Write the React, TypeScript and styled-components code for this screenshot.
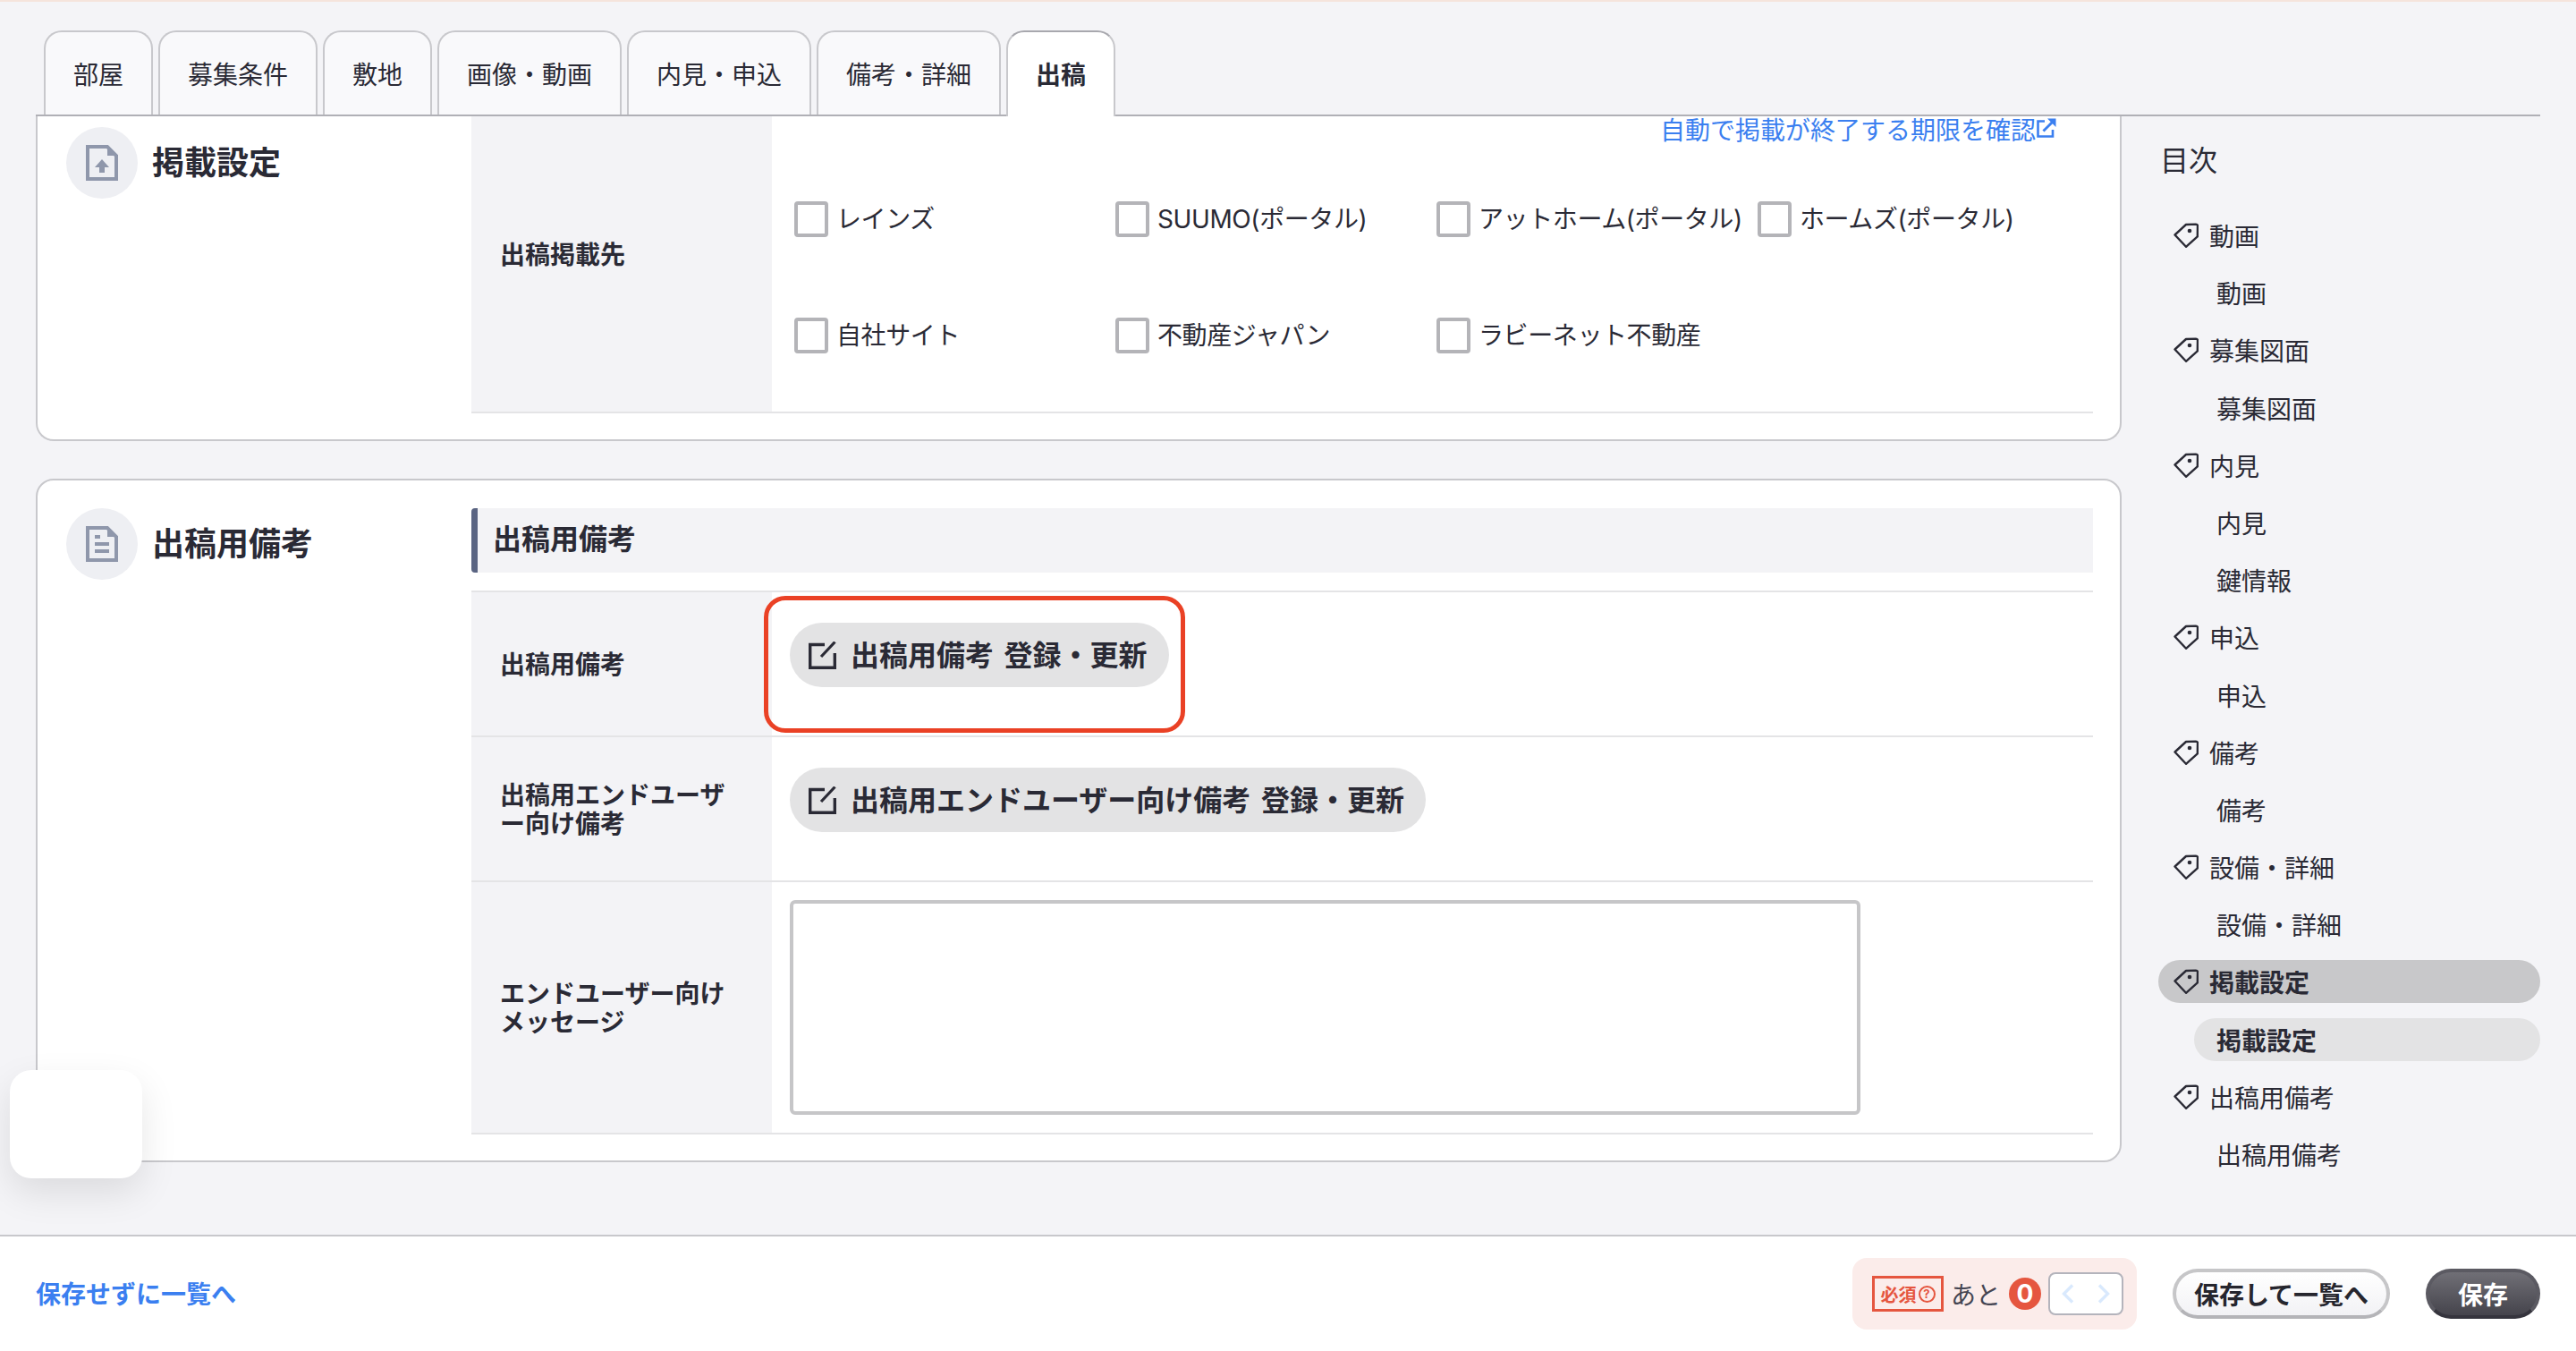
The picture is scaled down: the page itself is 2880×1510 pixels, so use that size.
import React from 'react';
import styled, { createGlobalStyle } from 'styled-components';

const GlobalStyle = createGlobalStyle`
  html, body {
    margin: 0;
    padding: 0;
    background: #f4f4f7;
  }
  body {
    font-family: "Inter", "Noto Sans CJK JP", sans-serif;
    color: #2a2a35;
  }
  * {
    box-sizing: border-box;
  }
`;

const tabs = ['部屋', '募集条件', '敷地', '画像・動画', '内見・申込', '備考・詳細', '出稿'];

const media = [
  ['レインズ', 'SUUMO(ポータル)', 'アットホーム(ポータル)', 'ホームズ(ポータル)'],
  ['自社サイト', '不動産ジャパン', 'ラビーネット不動産'],
];

const toc = [
  { title: '動画', subs: ['動画'] },
  { title: '募集図面', subs: ['募集図面'] },
  { title: '内見', subs: ['内見', '鍵情報'] },
  { title: '申込', subs: ['申込'] },
  { title: '備考', subs: ['備考'] },
  { title: '設備・詳細', subs: ['設備・詳細'] },
  { title: '掲載設定', subs: ['掲載設定'], active: true },
  { title: '出稿用備考', subs: ['出稿用備考'] },
];

const App: React.FC = () => {
  return (
    <Page>
      <GlobalStyle />
      <TopStrip />
      <TabBar>
        {tabs.map((t) => (
          <Tab key={t} $active={t === '出稿'}>{t}</Tab>
        ))}
      </TabBar>
      <Body>
        <Column>
          <Card $open>
            <SectionHead $top={12}>
              <IconCircle>
                <FileUpIcon />
              </IconCircle>
              <SectionTitle>掲載設定</SectionTitle>
            </SectionHead>
            <Table>
              <Row>
                <Label $raised>出稿掲載先</Label>
                <MediaCell>
                  <DeadlineLink>
                    自動で掲載が終了する期限を確認
                    <ExternalIcon />
                  </DeadlineLink>
                  <MediaGrid>
                    {media.flat().map((m) => (
                      <MediaOption key={m}>
                        <Check type="checkbox" />
                        {m}
                      </MediaOption>
                    ))}
                  </MediaGrid>
                </MediaCell>
              </Row>
            </Table>
          </Card>

          <Card>
            <SectionHead>
              <IconCircle>
                <FileTextIcon />
              </IconCircle>
              <SectionTitle>出稿用備考</SectionTitle>
            </SectionHead>
            <Table>
              <SubHeading>出稿用備考</SubHeading>
              <RowGroup>
                <Row>
                  <Label>出稿用備考</Label>
                  <Cell>
                    <EditButton>
                      <EditIcon />
                      出稿用備考 登録・更新
                    </EditButton>
                    <Highlight />
                  </Cell>
                </Row>
                <Row>
                  <Label>出稿用エンドユーザー向け備考</Label>
                  <Cell>
                    <EditButton>
                      <EditIcon />
                      出稿用エンドユーザー向け備考 登録・更新
                    </EditButton>
                  </Cell>
                </Row>
                <Row>
                  <Label>エンドユーザー向けメッセージ</Label>
                  <TextCell>
                    <Message />
                  </TextCell>
                </Row>
              </RowGroup>
            </Table>
          </Card>
        </Column>

        <Sidebar>
          <SidebarTitle>目次</SidebarTitle>
          <TocList>
            {toc.map((group) => (
              <React.Fragment key={group.title}>
                <TocMain $active={group.active}>
                  <TagIcon />
                  {group.title}
                </TocMain>
                {group.subs.map((s) => (
                  <TocSub key={s} $active={group.active}>{s}</TocSub>
                ))}
              </React.Fragment>
            ))}
          </TocList>
        </Sidebar>
      </Body>

      <Footer>
        <BackLink>保存せずに一覧へ</BackLink>
        <FooterActions>
          <RequiredBox>
            <RequiredTag>
              必須
              <HelpMark>?</HelpMark>
            </RequiredTag>
            <RemainText>あと</RemainText>
            <CountBadge>0</CountBadge>
            <PagerBox>
              <ChevronIcon dir="left" />
              <ChevronIcon dir="right" />
            </PagerBox>
          </RequiredBox>
          <SaveListButton>保存して一覧へ</SaveListButton>
          <SaveButton>保存</SaveButton>
        </FooterActions>
      </Footer>

      <FloatingBox />
    </Page>
  );
};

const FileUpIcon = () => (
  <svg width="36" height="40" viewBox="0 0 36 40" fill="none">
    <path d="M2 2H24L34 12V38H2Z" stroke="#8f97ab" strokeWidth="4" />
    <path d="M24 1L35 12H24Z" fill="#8f97ab" />
    <path d="M18 16L26 25H21V31H15V25H10Z" fill="#8f97ab" />
  </svg>
);

const FileTextIcon = () => (
  <svg width="36" height="40" viewBox="0 0 36 40" fill="none">
    <path d="M2 2H24L34 12V38H2Z" stroke="#8f97ab" strokeWidth="4" />
    <path d="M24 1L35 12H24Z" fill="#8f97ab" />
    <path d="M10 10H16V14H10ZM10 18H26V22H10ZM10 26H26V30H10Z" fill="#8f97ab" />
  </svg>
);

const ExternalIcon = () => (
  <ExternalSvg width="22" height="22" viewBox="0 0 22 22" fill="none">
    <path d="M9 3.5H1.5V20.5H18V13" stroke="#3b7ff0" strokeWidth="2.6" />
    <path d="M7.5 14.5L18 4" stroke="#3b7ff0" strokeWidth="3" />
    <path d="M12 0.5H21.5V10Z" fill="#3b7ff0" />
  </ExternalSvg>
);

const EditIcon = () => (
  <svg width="31" height="31" viewBox="0 0 31 31" fill="none">
    <path d="M18 3.5H1.7V29.3H29.3V13" stroke="#2a2a35" strokeWidth="3.4" />
    <path d="M14 17L29.5 0.5" stroke="#2a2a35" strokeWidth="3.2" />
  </svg>
);

const TagIcon = () => (
  <svg width="28" height="28" viewBox="0 0 28 28" fill="none">
    <path d="M1.5 13.5L14 2L25 1.6Q27 1.6 27 3.6L26.8 15.4L14 26.8Z" stroke="#2a2a35" strokeWidth="2.4" strokeLinejoin="round" />
    <circle cx="18" cy="9" r="2.3" fill="#2a2a35" />
  </svg>
);

const ChevronIcon = ({ dir }: { dir: 'left' | 'right' }) => (
  <svg width="14" height="22" viewBox="0 0 14 22" fill="none">
    <path d={dir === 'left' ? 'M12 1.5L2.5 11L12 20.5' : 'M2 1.5L11.5 11L2 20.5'} stroke="#d9e9fd" strokeWidth="3.4" />
  </svg>
);

const Page = styled.div`
  position: relative;
  display: flex;
  flex-direction: column;
  width: 2880px;
  height: 1510px;
  overflow: hidden;
  background: #f4f4f7;
`;

const TopStrip = styled.div`
  height: 2px;
  background: #f5e4dc;
`;

const TabBar = styled.div`
  display: flex;
  align-items: flex-start;
  gap: 6px;
  flex: none;
  height: 96px;
  margin: 32px 40px 0;
  padding-left: 9px;
  border-bottom: 2px solid #b0b0b6;
`;

const Tab = styled.div<{ $active?: boolean }>`
  display: flex;
  align-items: center;
  height: ${(p) => (p.$active ? '96px' : '94px')};
  padding: ${(p) => (p.$active ? '4px 31px 2px' : '4px 31px 0')};
  border: 2px solid #c8c8cc;
  border-top-color: ${(p) => (p.$active ? '#a8a8ae' : '#c8c8cc')};
  border-bottom: none;
  border-radius: 20px 20px 0 0;
  background: ${(p) => (p.$active ? '#fff' : '#f9f9fb')};
  font-size: 28px;
  font-weight: ${(p) => (p.$active ? 700 : 400)};
  line-height: 40px;
  white-space: nowrap;
`;

const Body = styled.div`
  flex: 1;
  display: flex;
  padding: 0 40px;
`;

const Column = styled.div`
  display: flex;
  flex-direction: column;
  gap: 42px;
  width: 2332px;
`;

const Card = styled.section<{ $open?: boolean }>`
  display: flex;
  padding: ${(p) => (p.$open ? '0 30px 29px 0' : '31px 30px 29px 0')};
  border: 2px solid #c8c8cc;
  border-top: ${(p) => (p.$open ? 'none' : '2px solid #c8c8cc')};
  border-radius: ${(p) => (p.$open ? '0 0 20px 20px' : '20px')};
  background: #fff;
`;

const SectionHead = styled.div<{ $top?: number }>`
  display: flex;
  align-items: flex-start;
  gap: 16px;
  flex: none;
  width: 485px;
  padding: ${(p) => p.$top ?? 0}px 0 0 32px;
`;

const IconCircle = styled.div`
  display: flex;
  align-items: center;
  justify-content: center;
  flex: none;
  width: 80px;
  height: 80px;
  border-radius: 50%;
  background: #eeeff3;
`;

const SectionTitle = styled.h2`
  margin: 0;
  font-size: 36px;
  font-weight: 700;
  line-height: 80px;
`;

const Table = styled.div`
  flex: 1;
  min-width: 0;
`;

const SubHeading = styled.h3`
  height: 72px;
  margin: 0 0 20px;
  padding-left: 17px;
  border-left: 7px solid #5a6482;
  border-radius: 4px 0 0 4px;
  background: #f3f3f6;
  font-size: 32px;
  font-weight: 700;
  line-height: 70px;
`;

const RowGroup = styled.div`
  border-top: 2px solid #e4e4e6;
`;

const Row = styled.div`
  display: flex;
  border-bottom: 2px solid #e4e4e6;
`;

const Label = styled.div<{ $raised?: boolean }>`
  display: flex;
  align-items: center;
  flex: none;
  width: 336px;
  padding: ${(p) => (p.$raised ? '0 32px 20px' : '2px 32px 0')};
  background: #f3f3f6;
  font-size: 28px;
  font-weight: 700;
  line-height: 32px;
`;

const Cell = styled.div`
  position: relative;
  flex: 1;
  height: 160px;
  padding: 34px 0 0 20px;
`;

const TextCell = styled.div`
  flex: 1;
  padding: 20px 0 20px 20px;
`;

const MediaCell = styled.div`
  flex: 1;
  min-width: 0;
  display: flex;
  flex-direction: column;
  padding: 0 41px 20px 25px;
`;

const DeadlineLink = styled.a`
  display: flex;
  align-self: flex-end;
  height: 50px;
  font-size: 28px;
  line-height: 32px;
  color: #3b7ff0;
  white-space: nowrap;
`;

const ExternalSvg = styled.svg`
  margin: 2px 0 0 1px;
`;

const MediaGrid = styled.div`
  display: grid;
  grid-template-columns: repeat(4, 359px);
  grid-auto-rows: 130px;
`;

const MediaOption = styled.label`
  display: flex;
  align-items: center;
  gap: 9px;
  font-size: 28px;
  line-height: 36px;
  letter-spacing: -0.4px;
  white-space: nowrap;
`;

const Check = styled.input`
  appearance: none;
  flex: none;
  width: 38px;
  height: 40px;
  margin: 0;
  border: 4px solid #b4b4b8;
  border-radius: 4px;
  background: #fff;
`;

const EditButton = styled.button`
  display: inline-flex;
  align-items: center;
  gap: 16px;
  height: 72px;
  padding: 0 24px 5px 21px;
  border: none;
  border-radius: 36px;
  background: #e3e3e4;
  color: #2a2a35;
  font-family: inherit;
  font-size: 32px;
  font-weight: 700;
  word-spacing: 4px;
  white-space: nowrap;

  svg {
    margin-bottom: -5px;
  }
`;

const Highlight = styled.div`
  position: absolute;
  left: -9px;
  top: 4px;
  width: 471px;
  height: 153px;
  border: 5px solid #ea4125;
  border-radius: 24px;
  pointer-events: none;
`;

const Message = styled.textarea`
  display: block;
  width: 1197px;
  height: 240px;
  border: 4px solid #c6c6c8;
  border-radius: 6px;
  background: #fff;
  resize: none;
`;

const Sidebar = styled.aside`
  flex: 1;
  padding: 30px 0 0 41px;
`;

const SidebarTitle = styled.div`
  height: 40px;
  margin: 0 0 39px 2px;
  font-size: 32px;
  line-height: 40px;
`;

const TocList = styled.div`
  display: flex;
  flex-direction: column;
  gap: 16.2px;
`;

const TocMain = styled.div<{ $active?: boolean }>`
  display: flex;
  align-items: center;
  gap: 12px;
  height: 48px;
  padding-left: 17px;
  border-radius: 24px;
  background: ${(p) => (p.$active ? '#c8c8ca' : 'transparent')};
  font-size: 28px;
  font-weight: ${(p) => (p.$active ? 700 : 400)};
`;

const TocSub = styled.div<{ $active?: boolean }>`
  display: flex;
  align-items: center;
  height: 48px;
  margin-left: 40px;
  padding-left: 25px;
  border-radius: 24px;
  background: ${(p) => (p.$active ? '#e3e3e4' : 'transparent')};
  font-size: 28px;
  font-weight: ${(p) => (p.$active ? 700 : 400)};
`;

const Footer = styled.footer`
  display: flex;
  align-items: center;
  justify-content: space-between;
  flex: none;
  height: 130px;
  padding: 0 40px;
  border-top: 2px solid #c8c8cc;
  background: #fff;
`;

const BackLink = styled.a`
  margin-top: -2px;
  font-size: 28px;
  font-weight: 700;
  color: #3b7ff0;
`;

const FooterActions = styled.div`
  display: flex;
  align-items: center;
  gap: 40px;
`;

const RequiredBox = styled.div`
  display: flex;
  align-items: center;
  width: 318px;
  height: 80px;
  padding-left: 22px;
  border-radius: 16px;
  background: #fbecea;
`;

const RequiredTag = styled.div`
  display: flex;
  align-items: center;
  justify-content: center;
  gap: 2px;
  flex: none;
  width: 80px;
  height: 40px;
  border: 3px solid #e5563f;
  color: #e5563f;
  font-size: 20px;
  font-weight: 700;
`;

const HelpMark = styled.span`
  display: flex;
  align-items: center;
  justify-content: center;
  flex: none;
  width: 19px;
  height: 19px;
  border: 2px solid #e5563f;
  border-radius: 50%;
  font-size: 13px;
  line-height: 1;
`;

const RemainText = styled.span`
  margin: 0 9px 0 8px;
  font-size: 28px;
  color: #454552;
`;

const CountBadge = styled.span`
  display: flex;
  align-items: center;
  justify-content: center;
  flex: none;
  width: 36px;
  height: 36px;
  border-radius: 50%;
  background: #e5563f;
  color: #fff;
  font-size: 28px;
  font-weight: 700;
`;

const PagerBox = styled.div`
  display: flex;
  align-items: center;
  justify-content: center;
  gap: 26px;
  flex: none;
  width: 84px;
  height: 48px;
  margin-left: 8px;
  border: 2px solid #b4b4bc;
  border-radius: 8px;
  background: #fff;
`;

const SaveListButton = styled.button`
  width: 243px;
  height: 56px;
  padding: 0;
  border: 4px solid #c6c6c8;
  border-bottom-color: #b4b4b8;
  border-radius: 28px;
  background: linear-gradient(#ffffff, #f2f2f5);
  color: #26262e;
  font-family: inherit;
  font-size: 28px;
  font-weight: 700;
`;

const SaveButton = styled.button`
  width: 128px;
  height: 56px;
  padding: 0;
  border: 4px solid #5b5a62;
  border-bottom-color: #35343d;
  border-radius: 28px;
  background: linear-gradient(#706f76, #45444c);
  color: #fff;
  font-family: inherit;
  font-size: 28px;
  font-weight: 700;
`;

const FloatingBox = styled.div`
  position: absolute;
  left: 11px;
  top: 1196px;
  width: 148px;
  height: 121px;
  border-radius: 24px;
  background: #fff;
  box-shadow: 0 16px 40px rgba(0, 0, 0, 0.1);
`;

export default App;
